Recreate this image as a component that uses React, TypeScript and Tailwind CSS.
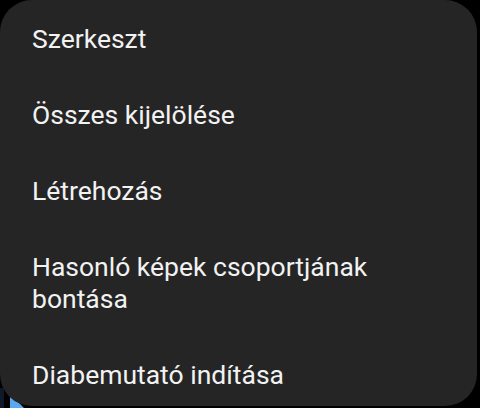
const ITEMS = [
  'Szerkeszt',
  'Összes kijelölése',
  'Létrehozás',
  'Hasonló képek csoportjának bontása',
  'Diabemutató indítása',
];

export default function App() {
  return (
    <div className="relative h-[408px] w-[480px] overflow-hidden bg-black" style={{ fontFamily: 'Roboto, "Noto Sans", sans-serif' }}>
      {/* bit of the screen behind the menu */}
      <svg className="absolute bottom-0 left-0" width="30" height="24" viewBox="0 0 30 24">
        <rect x="0" y="4" width="4" height="20" fill="#10182a" />
        <polygon points="10,10 24,24 10,24" fill="#5aa9f0" />
      </svg>

      <div className="relative mr-[3px] h-[406px] rounded-[32px] bg-[#252525] pt-[1px]">
        <ul className="flex flex-col">
          {ITEMS.map((label) => (
            <li key={label} className="py-[22px] pl-8 pr-8 text-[26.5px] leading-[32px] text-[#f2f2f2]">
              {label}
            </li>
          ))}
        </ul>
      </div>
    </div>
  );
}
